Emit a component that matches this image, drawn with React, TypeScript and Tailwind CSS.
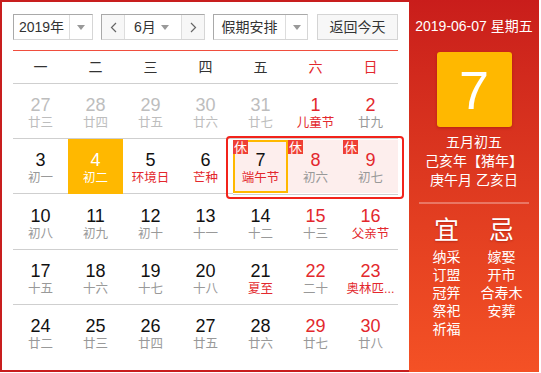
import React from "react";

type Day = {
  n: number;
  sub: string;
  muted?: boolean;
  weekend?: boolean;
  fest?: boolean;
  rest?: boolean;
  today?: boolean;
  selected?: boolean;
};

const weeks: Day[][] = [
  [
    { n: 27, sub: "廿三", muted: true },
    { n: 28, sub: "廿四", muted: true },
    { n: 29, sub: "廿五", muted: true },
    { n: 30, sub: "廿六", muted: true },
    { n: 31, sub: "廿七", muted: true },
    { n: 1, sub: "儿童节", weekend: true, fest: true },
    { n: 2, sub: "廿九", weekend: true },
  ],
  [
    { n: 3, sub: "初一" },
    { n: 4, sub: "初二", selected: true },
    { n: 5, sub: "环境日", fest: true },
    { n: 6, sub: "芒种", fest: true },
    { n: 7, sub: "端午节", fest: true, rest: true, today: true },
    { n: 8, sub: "初六", weekend: true, rest: true },
    { n: 9, sub: "初七", weekend: true, rest: true },
  ],
  [
    { n: 10, sub: "初八" },
    { n: 11, sub: "初九" },
    { n: 12, sub: "初十" },
    { n: 13, sub: "十一" },
    { n: 14, sub: "十二" },
    { n: 15, sub: "十三", weekend: true },
    { n: 16, sub: "父亲节", weekend: true, fest: true },
  ],
  [
    { n: 17, sub: "十五" },
    { n: 18, sub: "十六" },
    { n: 19, sub: "十七" },
    { n: 20, sub: "十八" },
    { n: 21, sub: "夏至", fest: true },
    { n: 22, sub: "二十", weekend: true },
    { n: 23, sub: "奥林匹...", weekend: true, fest: true },
  ],
  [
    { n: 24, sub: "廿二" },
    { n: 25, sub: "廿三" },
    { n: 26, sub: "廿四" },
    { n: 27, sub: "廿五" },
    { n: 28, sub: "廿六" },
    { n: 29, sub: "廿七", weekend: true },
    { n: 30, sub: "廿八", weekend: true },
  ],
];

const weekdays = ["一", "二", "三", "四", "五", "六", "日"];

const Caret = () => (
  <svg width="8" height="5" viewBox="0 0 8 5">
    <path d="M0 0h8L4 5z" fill="#999" />
  </svg>
);

const selectBorder = "border border-t-[#a9a9a9] border-l-[#a9a9a9] border-r-[#d6d6d6] border-b-[#d6d6d6]";

const Cell = ({ d }: { d: Day }) => {
  let numColor = "text-[#111]";
  if (d.muted) numColor = "text-[#bdbdbd]";
  else if (d.weekend) numColor = "text-[#e3282d]";
  let subColor = d.muted ? "text-[#bdbdbd]" : d.fest ? "text-[#e3282d]" : "text-[#999]";
  if (d.selected) {
    numColor = "text-white";
    subColor = "text-white";
  }

  const body = (
    <>
      <div className={`text-[18px] leading-[20px] ${numColor}`}>{d.n}</div>
      <div className={`text-[12.5px] leading-[17px] ${subColor}`}>{d.sub}</div>
    </>
  );

  if (d.rest) {
    return (
      <div className="h-[55px] border-b border-[#cfcfcf]">
        <div
          className={`relative mt-[1px] h-[53px] bg-[#fdeeed] text-center ${
            d.today ? "border-2 border-[#ffb800] pt-[8px]" : "pt-[10px]"
          }`}
        >
          <span
            className={`absolute flex h-[14px] w-[15px] items-center justify-center bg-[#ef3f35] text-[13px] leading-none text-white ${
              d.today ? "-left-[2px] -top-[2px]" : "left-0 top-0"
            }`}
          >
            休
          </span>
          {body}
        </div>
      </div>
    );
  }

  return (
    <div
      className={`h-[55px] border-b pt-[11px] text-center ${
        d.selected ? "bg-[#ffb800] border-[#ffb800]" : "border-[#cfcfcf]"
      }`}
    >
      {body}
    </div>
  );
};

export default function App() {
  return (
    <div
      className="flex h-[372px] w-[539px] bg-white"
      style={{ fontFamily: '"Liberation Sans", Arial, "Noto Sans CJK SC", sans-serif' }}
    >
      <div className="w-[409px] border-b-2 border-l-2 border-t-2 border-[#c81e1e] pl-[11px] pt-[12px]">
        <div className="flex h-[26px] w-[385px] text-[14px] text-[#333]">
          <div className={`flex w-[80px] bg-white ${selectBorder}`}>
            <div className="flex w-[55px] items-center justify-center">2019年</div>
            <div className="flex flex-1 items-center justify-center border-l border-[#ddd]">
              <Caret />
            </div>
          </div>
          <div className={`ml-[8px] flex w-[104px] ${selectBorder}`}>
            <div className="flex w-[22px] items-center justify-center bg-[#f7f7f7] text-[#555]">
              <svg width="7" height="11" viewBox="0 0 7 11">
                <path d="M6 1L1.5 5.5 6 10" fill="none" stroke="#666" strokeWidth="1.2" />
              </svg>
            </div>
            <div className="flex flex-1 items-center justify-between border-x border-[#ddd] bg-white pl-[9px] pr-[12px]">
              <span>6月</span>
              <Caret />
            </div>
            <div className="flex w-[22px] items-center justify-center bg-[#f7f7f7]">
              <svg width="7" height="11" viewBox="0 0 7 11">
                <path d="M1 1l4.5 4.5L1 10" fill="none" stroke="#666" strokeWidth="1.2" />
              </svg>
            </div>
          </div>
          <div className={`ml-[8px] flex w-[95px] bg-white ${selectBorder}`}>
            <div className="flex w-[71px] items-center justify-center">假期安排</div>
            <div className="flex flex-1 items-center justify-center border-l border-[#ddd]">
              <Caret />
            </div>
          </div>
          <div className="ml-[9px] flex flex-1 items-center justify-center border border-[#d4d4d4] bg-[#f7f7f7]">
            返回今天
          </div>
        </div>

        <div className="mt-[10px] h-px w-[385px] bg-[#f04e3e]" />

        <div className="grid h-[33px] w-[385px] grid-cols-7 border-b border-[#cfcfcf] text-[14px]">
          {weekdays.map((w, i) => (
            <div
              key={w}
              className={`flex items-center justify-center ${i >= 5 ? "text-[#e3282d]" : "text-[#333]"}`}
            >
              {w}
            </div>
          ))}
        </div>

        <div className="relative w-[385px]">
          {weeks.map((row, ri) => (
            <div key={ri} className="grid grid-cols-7">
              {row.map((d, ci) => (
                <div key={ci} className={ri === 4 ? "[&>div]:border-b-0" : ""}>
                  <Cell d={d} />
                </div>
              ))}
            </div>
          ))}
          <div className="pointer-events-none absolute left-[213px] top-[52px] h-[63px] w-[178px] rounded-[4px] border-2 border-[#f2231b]" />
        </div>
      </div>

      <div className="flex w-[130px] flex-col items-center bg-gradient-to-b from-[#c91d1b] to-[#f45125] pt-[16px] text-white">
        <div className="text-[14px] leading-[20px]">2019-06-07 星期五</div>
        <div className="mt-[16px] flex h-[75px] w-[75px] items-center justify-center rounded-[3px] bg-[#ffb800] text-[54px] leading-none shadow-[0_1px_3px_rgba(120,0,0,0.35)]">
          7
        </div>
        <div className="mt-[6px] text-center text-[14px] leading-[19px]">
          <div>五月初五</div>
          <div>己亥年【猪年】</div>
          <div>庚午月 乙亥日</div>
        </div>
        <div className="mt-[12px] h-[2px] w-[110px] bg-white/30" />
        <div className="mt-[12px] flex">
          <div className="flex w-[55px] flex-col items-center">
            <div className="text-[25px] leading-[28px] [text-shadow:0_1px_2px_rgba(120,0,0,0.4)]">宜</div>
            <div className="mt-[4px] text-center text-[14px] leading-[18px]">
              <div>纳采</div>
              <div>订盟</div>
              <div>冠笄</div>
              <div>祭祀</div>
              <div>祈福</div>
            </div>
          </div>
          <div className="flex w-[55px] flex-col items-center">
            <div className="text-[25px] leading-[28px] [text-shadow:0_1px_2px_rgba(120,0,0,0.4)]">忌</div>
            <div className="mt-[4px] whitespace-nowrap text-center text-[14px] leading-[18px]">
              <div>嫁娶</div>
              <div>开市</div>
              <div>合寿木</div>
              <div>安葬</div>
            </div>
          </div>
        </div>
      </div>
    </div>
  );
}
